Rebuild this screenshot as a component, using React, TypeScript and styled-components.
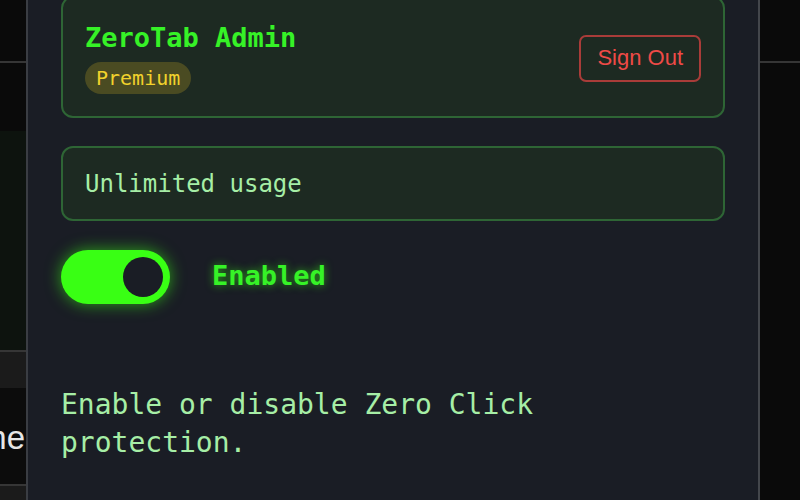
import React, { useState } from "react";
import styled, { createGlobalStyle } from "styled-components";

const GlobalStyle = createGlobalStyle`
  html, body {
    margin: 0;
    padding: 0;
    background: #0a0a0a;
    overflow: hidden;
  }
`;

const Page = styled.div`
  display: flex;
  width: 800px;
  height: 500px;
  overflow: hidden;
`;

// page behind the popup, left edge
const LeftBackdrop = styled.div`
  width: 26px;
  flex-shrink: 0;
  display: flex;
  flex-direction: column;
  background: #0a0a0a;
`;

const BackdropBand = styled.div<{ $h: number; $bg: string; $line?: boolean }>`
  height: ${(p) => p.$h}px;
  flex-shrink: 0;
  background: ${(p) => p.$bg};
  border-top: ${(p) => (p.$line ? "2px solid #363636" : "none")};
  box-sizing: border-box;
  overflow: hidden;
  display: flex;
  align-items: center;
  justify-content: flex-end;
`;

const BackdropText = styled.span`
  font-family: "Liberation Sans", Arial, sans-serif;
  font-size: 33px;
  color: #e6e6e6;
  white-space: nowrap;
  padding-right: 1px;
  margin-top: 3px;
`;

const RightBackdrop = styled.div`
  flex: 1;
  display: flex;
  flex-direction: column;
  background: #0a0a0a;
`;

const Popup = styled.div`
  width: 734px;
  flex-shrink: 0;
  box-sizing: border-box;
  background: #1a1d25;
  border-left: 2px solid #3a3d43;
  border-right: 2px solid #43464b;
  padding: 0 33px;
  display: flex;
  flex-direction: column;
  font-family: "DejaVu Sans Mono", Menlo, monospace;
`;

const Card = styled.div<{ $first?: boolean }>`
  background: #1d2a22;
  border: 2px solid #2e6535;
  border-radius: 12px;
  box-sizing: border-box;
  margin-top: ${(p) => (p.$first ? "-4px" : "28px")};
  padding: ${(p) => (p.$first ? "24px 22px 22px" : "22px 22px 20px")};
  display: flex;
  align-items: center;
  justify-content: space-between;
`;

const UserInfo = styled.div`
  display: flex;
  flex-direction: column;
  align-items: flex-start;
`;

const UserName = styled.div`
  font-size: 27px;
  line-height: 32px;
  font-weight: bold;
  color: #36f227;
`;

const PlanBadge = styled.span`
  margin-top: 8px;
  height: 32px;
  line-height: 32px;
  padding: 0 11px;
  border-radius: 16px;
  background: #4a4b22;
  color: #f2d22c;
  font-size: 20px;
`;

const SignOutButton = styled.button`
  background: transparent;
  border: 2px solid #a93c39;
  border-radius: 7px;
  color: #ee4a47;
  font-family: "Liberation Sans", Arial, sans-serif;
  font-size: 22px;
  padding: 0 16px;
  height: 47px;
  cursor: pointer;
`;

const UsageText = styled.div`
  font-size: 24px;
  line-height: 29px;
  color: #a6eea6;
`;

const ToggleRow = styled.div`
  margin-top: 29px;
  display: flex;
  align-items: center;
  gap: 42px;
`;

const Toggle = styled.button<{ $on: boolean }>`
  width: 109px;
  height: 54px;
  border: none;
  border-radius: 27px;
  padding: 0 7px;
  background: ${(p) => (p.$on ? "#39ff14" : "#3a3d43")};
  box-shadow: ${(p) => (p.$on ? "0 0 16px rgba(57, 255, 20, 0.6)" : "none")};
  display: flex;
  align-items: center;
  justify-content: ${(p) => (p.$on ? "flex-end" : "flex-start")};
  cursor: pointer;
`;

const Knob = styled.span`
  width: 40px;
  height: 40px;
  border-radius: 50%;
  background: #1a1d25;
`;

const ToggleLabel = styled.span<{ $on: boolean }>`
  font-size: 27px;
  line-height: 30px;
  margin-top: -3px;
  font-weight: bold;
  color: ${(p) => (p.$on ? "#36f227" : "#888")};
  text-shadow: ${(p) => (p.$on ? "0 0 8px rgba(57, 255, 20, 0.6)" : "none")};
`;

const Description = styled.p`
  margin: 82px 0 0;
  font-size: 28px;
  line-height: 38px;
  color: #a6eea6;
`;

export default function App() {
  const [enabled, setEnabled] = useState(true);

  return (
    <>
      <GlobalStyle />
      <Page>
        <LeftBackdrop>
          <BackdropBand $h={61} $bg="#0a0a0a" />
          <BackdropBand $h={70} $bg="#0a0a0a" $line />
          <BackdropBand $h={219} $bg="#0d130e" />
          <BackdropBand $h={38} $bg="#1b1b1b" $line />
          <BackdropBand $h={96} $bg="#0c0c0c">
            <BackdropText>ne</BackdropText>
          </BackdropBand>
          <BackdropBand $h={16} $bg="#1b1b1b" $line />
        </LeftBackdrop>

        <Popup>
          <Card $first>
            <UserInfo>
              <UserName>ZeroTab Admin</UserName>
              <PlanBadge>Premium</PlanBadge>
            </UserInfo>
            <SignOutButton>Sign Out</SignOutButton>
          </Card>

          <Card>
            <UsageText>Unlimited usage</UsageText>
          </Card>

          <ToggleRow>
            <Toggle $on={enabled} onClick={() => setEnabled(!enabled)}>
              <Knob />
            </Toggle>
            <ToggleLabel $on={enabled}>
              {enabled ? "Enabled" : "Disabled"}
            </ToggleLabel>
          </ToggleRow>

          <Description>Enable or disable Zero Click protection.</Description>
        </Popup>

        <RightBackdrop>
          <BackdropBand $h={61} $bg="#0a0a0a" />
          <BackdropBand $h={439} $bg="#0a0a0a" $line />
        </RightBackdrop>
      </Page>
    </>
  );
}
